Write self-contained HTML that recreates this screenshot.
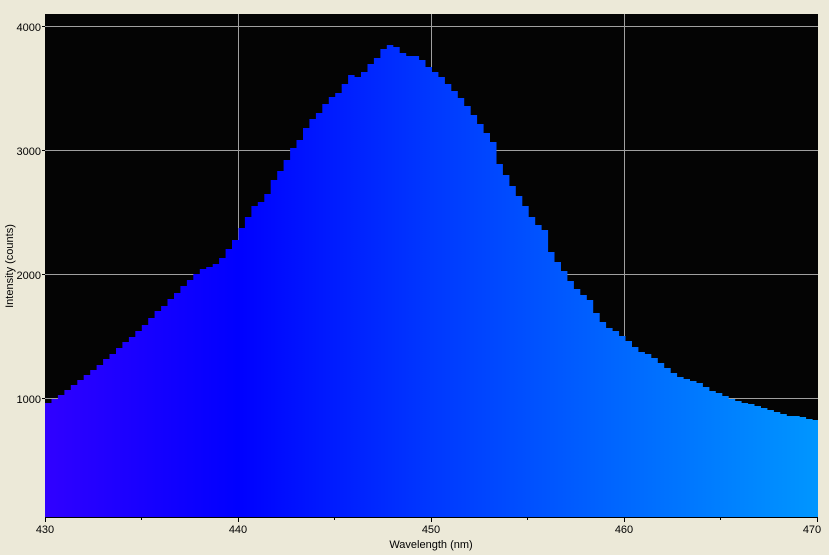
<!DOCTYPE html>
<html><head><style>
body{margin:0;background:#ECE9D8;width:829px;height:555px;overflow:hidden;font-family:"Liberation Sans",sans-serif;}
</style></head><body>
<svg id="s" width="829" height="555" xmlns="http://www.w3.org/2000/svg" style="position:absolute;left:0;top:0">
<defs><linearGradient id="g" x1="45" x2="818" y1="0" y2="0" gradientUnits="userSpaceOnUse">
<stop offset="0" stop-color="#3000FF"/><stop offset="0.25" stop-color="#0000FF"/><stop offset="0.5" stop-color="#0038FF"/><stop offset="0.75" stop-color="#0068FF"/><stop offset="1" stop-color="#0096FF"/></linearGradient></defs>
<rect x="45" y="14" width="773" height="503" fill="#040404"/>
<g stroke="#A0A0A0" stroke-width="1">
<line x1="45" x2="818" y1="26.5" y2="26.5"/><line x1="45" x2="818" y1="150.5" y2="150.5"/><line x1="45" x2="818" y1="274.5" y2="274.5"/><line x1="45" x2="818" y1="398.5" y2="398.5"/>
<line x1="238.5" x2="238.5" y1="14" y2="517"/><line x1="431.5" x2="431.5" y1="14" y2="517"/><line x1="624.5" x2="624.5" y1="14" y2="517"/>
</g>
<path id="p" fill="url(#g)"/>
<g stroke="#000"><line x1="45" x2="818" y1="517.5" y2="517.5"/>
<line x1="45.5" x2="45.5" y1="517" y2="522"/><line x1="238.5" x2="238.5" y1="517" y2="522"/><line x1="431.5" x2="431.5" y1="517" y2="522"/><line x1="624.5" x2="624.5" y1="517" y2="522"/><line x1="817.5" x2="817.5" y1="517" y2="522"/>
<line x1="141.5" x2="141.5" y1="517" y2="520"/><line x1="334.5" x2="334.5" y1="517" y2="520"/><line x1="527.5" x2="527.5" y1="517" y2="520"/><line x1="720.5" x2="720.5" y1="517" y2="520"/>
<line x1="42" x2="45" y1="26.5" y2="26.5"/><line x1="42" x2="45" y1="150.5" y2="150.5"/><line x1="42" x2="45" y1="274.5" y2="274.5"/><line x1="42" x2="45" y1="398.5" y2="398.5"/>
</g>
<g font-size="11" fill="#000" font-family="Liberation Sans,sans-serif">
<text x="41" y="31" text-anchor="end">4000</text><text x="41" y="155" text-anchor="end">3000</text><text x="41" y="279" text-anchor="end">2000</text><text x="41" y="403" text-anchor="end">1000</text>
<text x="45" y="533" text-anchor="middle">430</text><text x="238" y="533" text-anchor="middle">440</text><text x="431" y="533" text-anchor="middle">450</text><text x="624" y="533" text-anchor="middle">460</text><text x="812" y="533" text-anchor="middle">470</text>
<text x="431" y="548" text-anchor="middle">Wavelength (nm)</text>
<text transform="translate(13,266) rotate(-90)" text-anchor="middle">Intensity (counts)</text>
</g>
</svg>
<script>
var k=[[45,408],[50,401],[58,398],[65,392],[75,384],[85,377],[95,369],[105,360],[115,352],[125,343],[135,334],[145,325],[155,314],[165,305],[175,295],[185,285],[195,275],[205,268],[215,265],[225,255],[235,240],[245,222],[255,205],[265,200],[275,178],[285,165],[290,152],[300,140],[305,130],[310,122],[320,112],[330,98],[340,92],[350,75],[360,78],[370,65],[380,55],[386,45],[395,45],[405,55],[420,57],[432,70],[445,80],[460,97],[472,112],[485,130],[495,145],[500,165],[515,190],[528,210],[535,222],[545,230],[550,250],[560,265],[570,280],[578,290],[590,300],[600,320],[610,328],[620,334],[630,342],[640,352],[650,355],[660,362],[670,370],[680,377],[690,380],[700,383],[710,390],[720,393],[730,398],[740,402],[750,404],[760,407],[770,410],[780,413],[790,416],[800,416],[810,419],[818,420]];
function f(x){for(var i=1;i<k.length;i++){if(x<=k[i][0]){var a=k[i-1],b=k[i];return a[1]+(b[1]-a[1])*(x-a[0])/(b[0]-a[0]);}}return 420;}
var d="M45 517",w=6.45;
for(var x=45;x<818;x+=w){var y=Math.round(f(x+w/2));var x2=Math.min(818,x+w);d+=" L"+x.toFixed(1)+" "+y+" L"+x2.toFixed(1)+" "+y;}
d+=" L818 517Z";document.getElementById("p").setAttribute("d",d);
</script>
</body></html>
